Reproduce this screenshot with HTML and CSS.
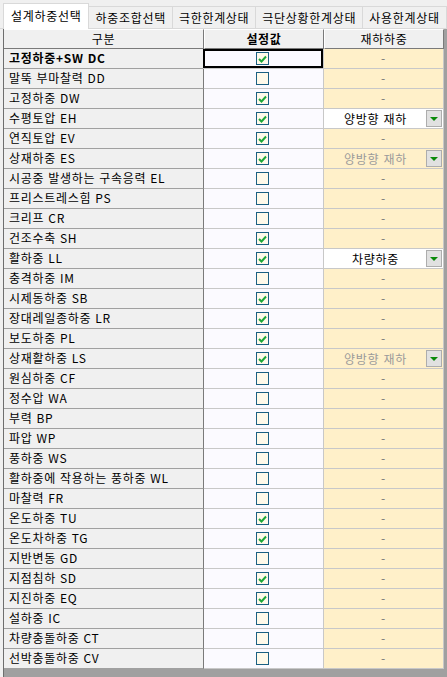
FILE: index.html
```html
<!DOCTYPE html>
<html lang="ko">
<head>
    <meta charset="UTF-8">
    <meta name="viewport" content="width=device-width, initial-scale=1.0">
    <title>설계하중선택</title>
    <link rel="stylesheet" href="styles.css">
</head>
<body>
    <div class="tabs">
        <div class="tab active">설계하중선택</div>
        <div class="tab">하중조합선택</div>
        <div class="tab">극한한계상태</div>
        <div class="tab">극단상황한계상태</div>
        <div class="tab">사용한계상태</div>
    </div>

    <div class="panel">
        <div class="grid" id="grid">
            <div class="row head">
                <div class="cell hcell">구분</div>
                <div class="cell hcell bold">설정값</div>
                <div class="cell hcell">재하하중</div>
            </div>
        </div>
    </div>

    <script>
        // [이름, 체크, 재하하중(null = "-"), 편집가능]
        var loads = [
            ["고정하중+SW DC", 1], ["말뚝 부마찰력 DD", 0], ["고정하중 DW", 1],
            ["수평토압 EH", 1, "양방향 재하", true], ["연직토압 EV", 1],
            ["상재하중 ES", 1, "양방향 재하", false], ["시공중 발생하는 구속응력 EL", 0],
            ["프리스트레스힘 PS", 0], ["크리프 CR", 0], ["건조수축 SH", 1],
            ["활하중 LL", 1, "차량하중", true], ["충격하중 IM", 0], ["시제동하중 SB", 1],
            ["장대레일종하중 LR", 1], ["보도하중 PL", 1],
            ["상재활하중 LS", 1, "양방향 재하", false], ["원심하중 CF", 0],
            ["정수압 WA", 0], ["부력 BP", 0], ["파압 WP", 0], ["풍하중 WS", 0],
            ["활하중에 작용하는 풍하중 WL", 0], ["마찰력 FR", 0], ["온도하중 TU", 1],
            ["온도차하중 TG", 1], ["지반변동 GD", 0], ["지점침하 SD", 1],
            ["지진하중 EQ", 1], ["설하중 IC", 0], ["차량충돌하중 CT", 0],
            ["선박충돌하중 CV", 0]
        ];

        var check = '<svg width="9" height="8" viewBox="0 0 9 8"><path d="M1 4 L3.5 6.5 L8 1.5" fill="none" stroke="#1fa83a" stroke-width="2"/></svg>';

        var grid = document.getElementById("grid");
        var html = "";
        loads.forEach(function(item, i)
        {
            var load = '<span class="dash">-</span>';
            var cls = "cell val";
            if (item[2])
            {
                cls += item[3] ? " edit" : "";
                load = '<span class="combo-text' + (item[3] ? '' : ' off') + '">' + item[2] + '</span>' +
                       '<span class="combo-btn"><i></i></span>';
            }
            html += '<div class="row">' +
                '<div class="cell name' + (i === 0 ? ' bold' : '') + '">' + item[0] + '</div>' +
                '<div class="cell chk' + (i === 0 ? ' current' : '') + '"><span class="box">' + (item[1] ? check : '') + '</span></div>' +
                '<div class="' + cls + '">' + load + '</div>' +
                '</div>';
        });
        grid.insertAdjacentHTML("beforeend", html);
    </script>
</body>
</html>
```

FILE: styles.css
```css
body
{
    margin: 0;
    background: #f0f0f0;
    font-family: "Noto Sans CJK KR", "Noto Sans", sans-serif;
    font-size: 12px;
    letter-spacing: 0.7px;
    color: #000;
    overflow: hidden;
}
.tabs
{
    display: flex;
    height: 25px;
    padding: 3px 0 0 3px;
    align-items: flex-end;
    border-bottom: 1px solid #d9d9d9;
}
.tab
{
    height: 22px;
    line-height: 21px;
    padding: 0 6px 0 6px;
    border: 1px solid #d9d9d9;
    border-bottom: none;
    margin-left: -1px;
    box-sizing: border-box;
    white-space: nowrap;
}
.tab:first-child
{
    margin-left: 0;
}
.tab.active
{
    background: #fff;
    margin-bottom: -1px;
    height: 26px;
    line-height: 24px;
    padding: 0 7px 0 7px;
}
.panel
{
    padding: 0 0 0 3px;
}
.grid
{
    background: #a0a0a0;
    border-left: 1px solid #6e6e6e;
    height: 660px;
}
.row
{
    display: grid;
    grid-template-columns: 200px 120px 120px;
    height: 20px;
}
.cell
{
    box-sizing: border-box;
    border-right: 1px solid #c8c8c8;
    border-bottom: 1px solid #c8c8c8;
    height: 20px;
    line-height: 18px;
    white-space: nowrap;
    overflow: hidden;
}
.hcell
{
    background: #f0f0f0;
    text-align: center;
    border-top: 1px solid #fff;
    border-left: 1px solid #fff;
    border-right: 1px solid #7a7a7a;
    border-bottom: 1px solid #7a7a7a;
    line-height: 17px;
}
.head .hcell:first-child
{
    border-left: none;
}
.bold
{
    font-weight: bold;
}
.name
{
    background: #f0f0f0;
    padding-left: 5px;
    border-right: 1px solid #7a7a7a;
    border-bottom: 1px solid #a0a0a0;
}
.chk
{
    background: #fbfaff;
    display: flex;
    align-items: center;
    justify-content: center;
}
.chk.current
{
    box-shadow: inset 0 0 0 2px #000;
    margin-left: -1px;
    width: 121px;
}
.box
{
    width: 13px;
    height: 13px;
    box-sizing: border-box;
    border: 1px solid #1b6082;
    background: #fffaea;
    display: flex;
    align-items: center;
    justify-content: center;
    margin-left: -2px;
}
.val
{
    background: #fff0c9;
    display: flex;
    align-items: center;
}
.val.edit
{
    background: #fff;
}
.dash
{
    flex: 1;
    text-align: center;
    color: #7a7a7a;
}
.combo-text
{
    flex: 1;
    text-align: center;
    padding-left: 1px;
}
.combo-text.off
{
    color: #9a9a9a;
}
.combo-btn
{
    width: 16px;
    height: 17px;
    box-sizing: border-box;
    margin-right: 1px;
    background: #e1e1e1;
    border: 1px solid #adadad;
    display: flex;
    align-items: center;
    justify-content: center;
}
.combo-btn i
{
    width: 0;
    height: 0;
    border-left: 4px solid transparent;
    border-right: 4px solid transparent;
    border-top: 4px solid #0a8a0a;
}
```
